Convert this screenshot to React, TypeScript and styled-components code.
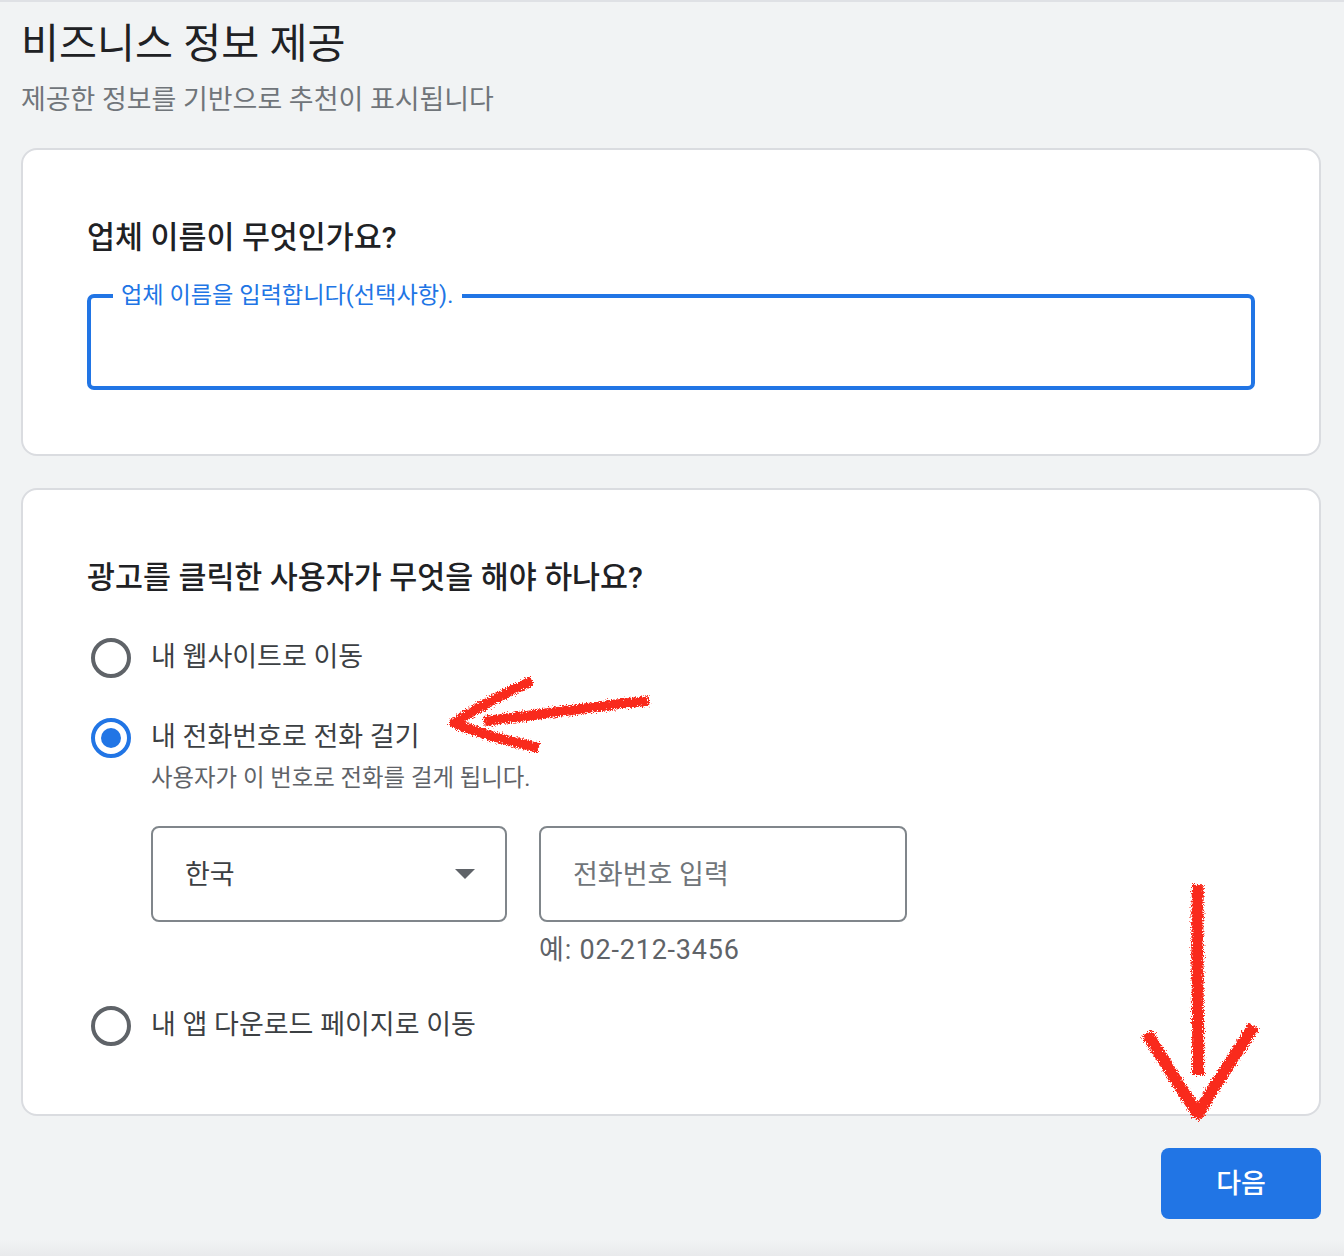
import React from "react";
import styled, { createGlobalStyle } from "styled-components";

const Global = createGlobalStyle`
  html, body { margin: 0; padding: 0; background: #f1f3f4; }
  body { font-family: Roboto, "Noto Sans CJK KR", sans-serif; }
  * { box-sizing: border-box; }
`;

const Page = styled.div`
  position: relative;
  width: 1344px;
  height: 1256px;
  overflow: hidden;
  border-top: 2px solid #dfe1e5;
  background: linear-gradient(to bottom, #f1f3f4 1238px, #e9eaec 1254px);
  padding: 0 23px 0 21px;
`;
const Title = styled.h1`
  margin: 20px 0 0;
  font-size: 41.3px;
  line-height: 44px;
  font-weight: 400;
  color: #202124;
`;
const Subtitle = styled.p`
  margin: 17px 0 0;
  font-size: 26.95px;
  line-height: 34px;
  color: #70757a;
`;
const Card = styled.section<{ $h: number; $top: number }>`
  height: ${(p) => p.$h}px;
  margin-top: ${(p) => p.$top}px;
  background: #fff;
  border: 2px solid #dadce0;
  border-radius: 16px;
  padding: 68px 64px 0;
`;
const Question = styled.h2`
  margin: 0;
  font-size: 30.4px;
  line-height: 40px;
  font-weight: 500;
  color: #202124;
`;
const FloatingField = styled.div`
  position: relative;
  margin-top: 36px;
  height: 96px;
  border: 4px solid #2175e5;
  border-radius: 7px;
`;
const FloatingLabel = styled.label`
  position: absolute;
  left: 22px;
  top: -20px;
  padding: 0 9px 0 8px;
  background: #fff;
  font-size: 23.2px;
  line-height: 34px;
  color: #2175e5;
`;
const Options = styled.div`
  display: flex;
  flex-direction: column;
  margin-top: 41px;
`;
const Option = styled.div<{ $top?: number }>`
  display: flex;
  gap: 20px;
  margin-top: ${(p) => p.$top ?? 0}px;
  padding-left: 4px;
`;
const Radio = styled.span<{ $on?: boolean }>`
  flex: none;
  width: 40px;
  height: 40px;
  margin-top: -1px;
  border-radius: 50%;
  border: 4px solid ${(p) => (p.$on ? "#2175e5" : "#5f6368")};
  display: flex;
  align-items: center;
  justify-content: center;
  &::after {
    content: "";
    display: ${(p) => (p.$on ? "block" : "none")};
    width: 20px;
    height: 20px;
    border-radius: 50%;
    background: #2175e5;
  }
`;
const OptionBody = styled.div`
  display: flex;
  flex-direction: column;
`;
const OptionLabel = styled.div`
  font-size: 27px;
  line-height: 36px;
  color: #3c4043;
`;
const OptionHint = styled.div`
  margin-top: 7px;
  font-size: 23.4px;
  line-height: 32px;
  color: #5f6368;
`;
const PhoneRow = styled.div`
  display: flex;
  gap: 32px;
  margin-top: 32px;
`;
const Select = styled.div`
  width: 356px;
  height: 96px;
  border: 2px solid #80868b;
  border-radius: 8px;
  padding: 0 32px 4px;
  display: flex;
  align-items: center;
  justify-content: space-between;
  font-size: 27px;
  color: #3c4043;
`;
const Caret = styled.span`
  width: 0;
  height: 0;
  margin: 4px -2px 0 0;
  border-left: 10px solid transparent;
  border-right: 10px solid transparent;
  border-top: 10px solid #5f6368;
`;
const PhoneColumn = styled.div`
  display: flex;
  flex-direction: column;
`;
const PhoneInput = styled.div`
  width: 368px;
  height: 96px;
  border: 2px solid #80868b;
  border-radius: 8px;
  padding: 0 32px 4px;
  display: flex;
  align-items: center;
  font-size: 27px;
  color: #70757a;
`;
const PhoneHint = styled.div`
  margin-top: 10px;
  font-size: 27px;
  line-height: 36px;
  letter-spacing: 0.8px;
  color: #5f6368;
`;
const Footer = styled.div`
  display: flex;
  justify-content: flex-end;
  margin-top: 32px;
`;
const NextButton = styled.button`
  width: 160px;
  height: 71px;
  border: 0;
  border-radius: 8px;
  padding: 0 0 5px;
  background: #2175e5;
  color: #fff;
  font: 500 27px Roboto, "Noto Sans CJK KR", sans-serif;
`;
const Scribble = styled.svg`
  position: absolute;
  left: 0;
  top: -2px;
  pointer-events: none;
`;

export default function App() {
  return (
    <Page>
      <Global />
      <Title>비즈니스 정보 제공</Title>
      <Subtitle>제공한 정보를 기반으로 추천이 표시됩니다</Subtitle>
      <Card $h={308} $top={31}>
        <Question>업체 이름이 무엇인가요?</Question>
        <FloatingField>
          <FloatingLabel>업체 이름을 입력합니다(선택사항).</FloatingLabel>
        </FloatingField>
      </Card>
      <Card $h={628} $top={32}>
        <Question>광고를 클릭한 사용자가 무엇을 해야 하나요?</Question>
        <Options>
          <Option>
            <Radio />
            <OptionBody>
              <OptionLabel>내 웹사이트로 이동</OptionLabel>
            </OptionBody>
          </Option>
          <Option $top={41}>
            <Radio $on />
            <OptionBody>
              <OptionLabel>내 전화번호로 전화 걸기</OptionLabel>
              <OptionHint>사용자가 이 번호로 전화를 걸게 됩니다.</OptionHint>
              <PhoneRow>
                <Select>
                  한국
                  <Caret />
                </Select>
                <PhoneColumn>
                  <PhoneInput>전화번호 입력</PhoneInput>
                  <PhoneHint>예: 02-212-3456</PhoneHint>
                </PhoneColumn>
              </PhoneRow>
            </OptionBody>
          </Option>
          <Option $top={39}>
            <Radio />
            <OptionBody>
              <OptionLabel>내 앱 다운로드 페이지로 이동</OptionLabel>
            </OptionBody>
          </Option>
        </Options>
      </Card>
      <Footer>
        <NextButton>다음</NextButton>
      </Footer>
      <Scribble width="1344" height="1256" viewBox="0 0 1344 1256" fill="none">
        <defs>
          <filter id="rough" x="-10%" y="-10%" width="120%" height="120%" colorInterpolationFilters="sRGB">
            <feTurbulence type="fractalNoise" baseFrequency="0.8" numOctaves="2" seed="4" result="noise" />
            <feDisplacementMap in="SourceGraphic" in2="noise" scale="8" xChannelSelector="R" yChannelSelector="G" />
          </filter>
        </defs>
        <g stroke="#f92a1c" strokeLinecap="butt" strokeLinejoin="round" filter="url(#rough)">
          <path d="M532 681 C505 693 477 708 454 723 C480 734 510 741 539 748" strokeWidth="10" />
          <path d="M649 701 C600 705 550 714 484 721" strokeWidth="10" />
          <path d="M1198 885 C1196 950 1199 1020 1198 1075" strokeWidth="12" />
          <path d="M1147 1033 C1165 1063 1182 1090 1198 1114 C1215 1085 1235 1055 1254 1026" strokeWidth="12" />
        </g>
      </Scribble>
    </Page>
  );
}
